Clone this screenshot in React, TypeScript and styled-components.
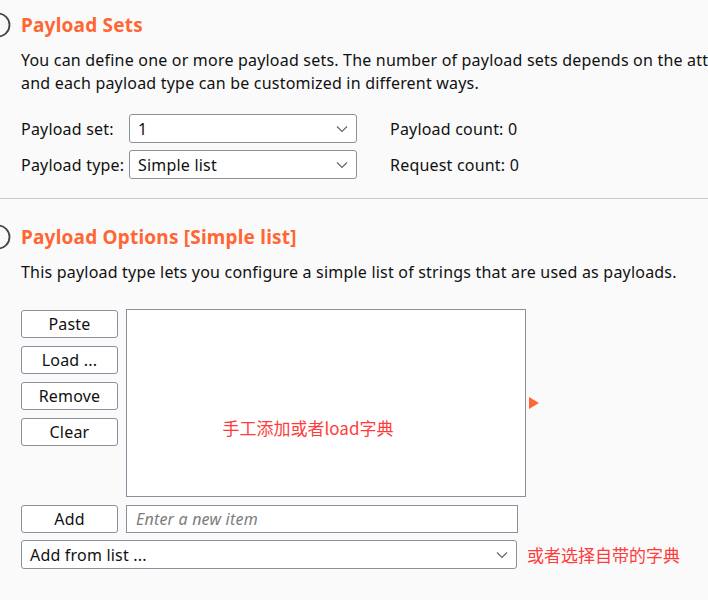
import styled, { createGlobalStyle } from "styled-components";

const GlobalStyle = createGlobalStyle`
  html, body {
    margin: 0;
    padding: 0;
    background: #fafafa;
  }
  body {
    font-family: "Noto Sans", "Noto Sans CJK SC", sans-serif;
    color: #111;
    overflow: hidden;
  }
`;

function Chevron() {
  return (
    <svg width="12" height="8" viewBox="0 0 12 8">
      <path d="M1 1.5 L6 6.5 L11 1.5" fill="none" stroke="#666" strokeWidth="1.2" />
    </svg>
  );
}

function HelpCircle() {
  return (
    <svg width="22" height="26" viewBox="0 0 22 26">
      <circle cx="9" cy="13" r="11.5" fill="none" stroke="#444" strokeWidth="1.8" />
    </svg>
  );
}

export default function App() {
  return (
    <Page>
      <GlobalStyle />
      <Section top={12}>
        <Header>
          <HelpIcon>
            <HelpCircle />
          </HelpIcon>
          <Title>Payload Sets</Title>
        </Header>
        <Desc>
          <Line>
            You can define one or more payload sets. The number of payload sets depends on the attack type defined in the Positions tab.
          </Line>
          <Line>and each payload type can be customized in different ways.</Line>
        </Desc>
        <FormGrid>
          <Label>Payload set:</Label>
          <Select>
            <span>1</span>
            <Chevron />
          </Select>
          <Count>Payload count: 0</Count>
          <Label>Payload type:</Label>
          <Select>
            <span>Simple list</span>
            <Chevron />
          </Select>
          <Count>Request count: 0</Count>
        </FormGrid>
      </Section>
      <Divider />
      <Section top={25}>
        <Header>
          <HelpIcon>
            <HelpCircle />
          </HelpIcon>
          <Title>Payload Options [Simple list]</Title>
        </Header>
        <Desc>
          <Line>This payload type lets you configure a simple list of strings that are used as payloads.</Line>
        </Desc>
        <ListArea>
          <ButtonColumn>
            <Button>Paste</Button>
            <Button>Load ...</Button>
            <Button>Remove</Button>
            <Button>Clear</Button>
          </ButtonColumn>
          <ListBox>
            <Note>手工添加或者load字典</Note>
          </ListBox>
          <Arrow />
        </ListArea>
        <AddRow>
          <Button>Add</Button>
          <ItemInput placeholder="Enter a new item" />
        </AddRow>
        <FromListRow>
          <WideSelect>
            <span>Add from list ...</span>
            <Chevron />
          </WideSelect>
          <Note>或者选择自带的字典</Note>
        </FromListRow>
      </Section>
    </Page>
  );
}

const Page = styled.div`
  width: 708px;
  height: 600px;
  overflow: hidden;
  font-size: 16px;
  letter-spacing: 0.2px;
`;

const Section = styled.div<{ top: number }>`
  padding: ${(p) => p.top}px 0 0 21px;
`;

const Header = styled.div`
  display: flex;
  align-items: center;
  height: 26px;
  position: relative;
`;

const HelpIcon = styled.div`
  position: absolute;
  left: -32px;
  top: 0;
  height: 26px;
`;

const Title = styled.div`
  font-size: 19px;
  font-weight: 700;
  color: #ff6633;
  letter-spacing: 0.2px;
`;

const Desc = styled.div`
  margin-top: 11px;
  line-height: 23px;
`;

const Line = styled.div`
  white-space: nowrap;
`;

const FormGrid = styled.div`
  display: grid;
  grid-template-columns: 108px 228px auto;
  row-gap: 7px;
  align-items: center;
  margin-top: 19px;
`;

const Label = styled.div``;

const Count = styled.div`
  padding-left: 33px;
`;

const Select = styled.div`
  box-sizing: border-box;
  height: 29px;
  border: 1px solid #8e8e9c;
  border-radius: 3px;
  background: #fff;
  display: flex;
  align-items: center;
  justify-content: space-between;
  padding: 0 8px;
`;

const WideSelect = styled(Select)`
  width: 496px;
`;

const Divider = styled.div`
  margin-top: 19px;
  height: 1px;
  background: #cccccc;
`;

const ListArea = styled.div`
  display: flex;
  align-items: flex-start;
  margin-top: 25px;
`;

const ButtonColumn = styled.div`
  display: flex;
  flex-direction: column;
  gap: 8px;
  margin-top: 1px;
  margin-right: 8px;
`;

const Button = styled.div`
  box-sizing: border-box;
  width: 97px;
  height: 28px;
  border: 1px solid #8e8e9c;
  border-radius: 3px;
  background: #fff;
  display: flex;
  align-items: center;
  justify-content: center;
  flex-shrink: 0;
`;

const ListBox = styled.div`
  box-sizing: border-box;
  width: 400px;
  height: 188px;
  border: 1px solid #8e8e9c;
  background: #fff;
  display: flex;
  align-items: center;
  justify-content: center;
  padding-top: 48px;
  padding-right: 36px;
`;

const Note = styled.span`
  color: #ff3b3b;
  font-size: 17px;
  letter-spacing: 0;
  font-family: "Noto Sans CJK SC", sans-serif;
`;

const Arrow = styled.div`
  width: 0;
  height: 0;
  border-top: 6px solid transparent;
  border-bottom: 6px solid transparent;
  border-left: 10px solid #ff6633;
  margin-left: 3px;
  margin-top: 88px;
`;

const AddRow = styled.div`
  display: flex;
  gap: 8px;
  margin-top: 8px;
`;

const ItemInput = styled.input`
  box-sizing: border-box;
  width: 392px;
  height: 28px;
  border: 1px solid #8e8e9c;
  background: #fff;
  font: italic 16px "Noto Sans", sans-serif;
  letter-spacing: 0.2px;
  padding: 0 9px;
  outline: none;
  &::placeholder {
    color: #7d7d7d;
  }
`;

const FromListRow = styled.div`
  display: flex;
  align-items: center;
  gap: 10px;
  margin-top: 7px;
`;
